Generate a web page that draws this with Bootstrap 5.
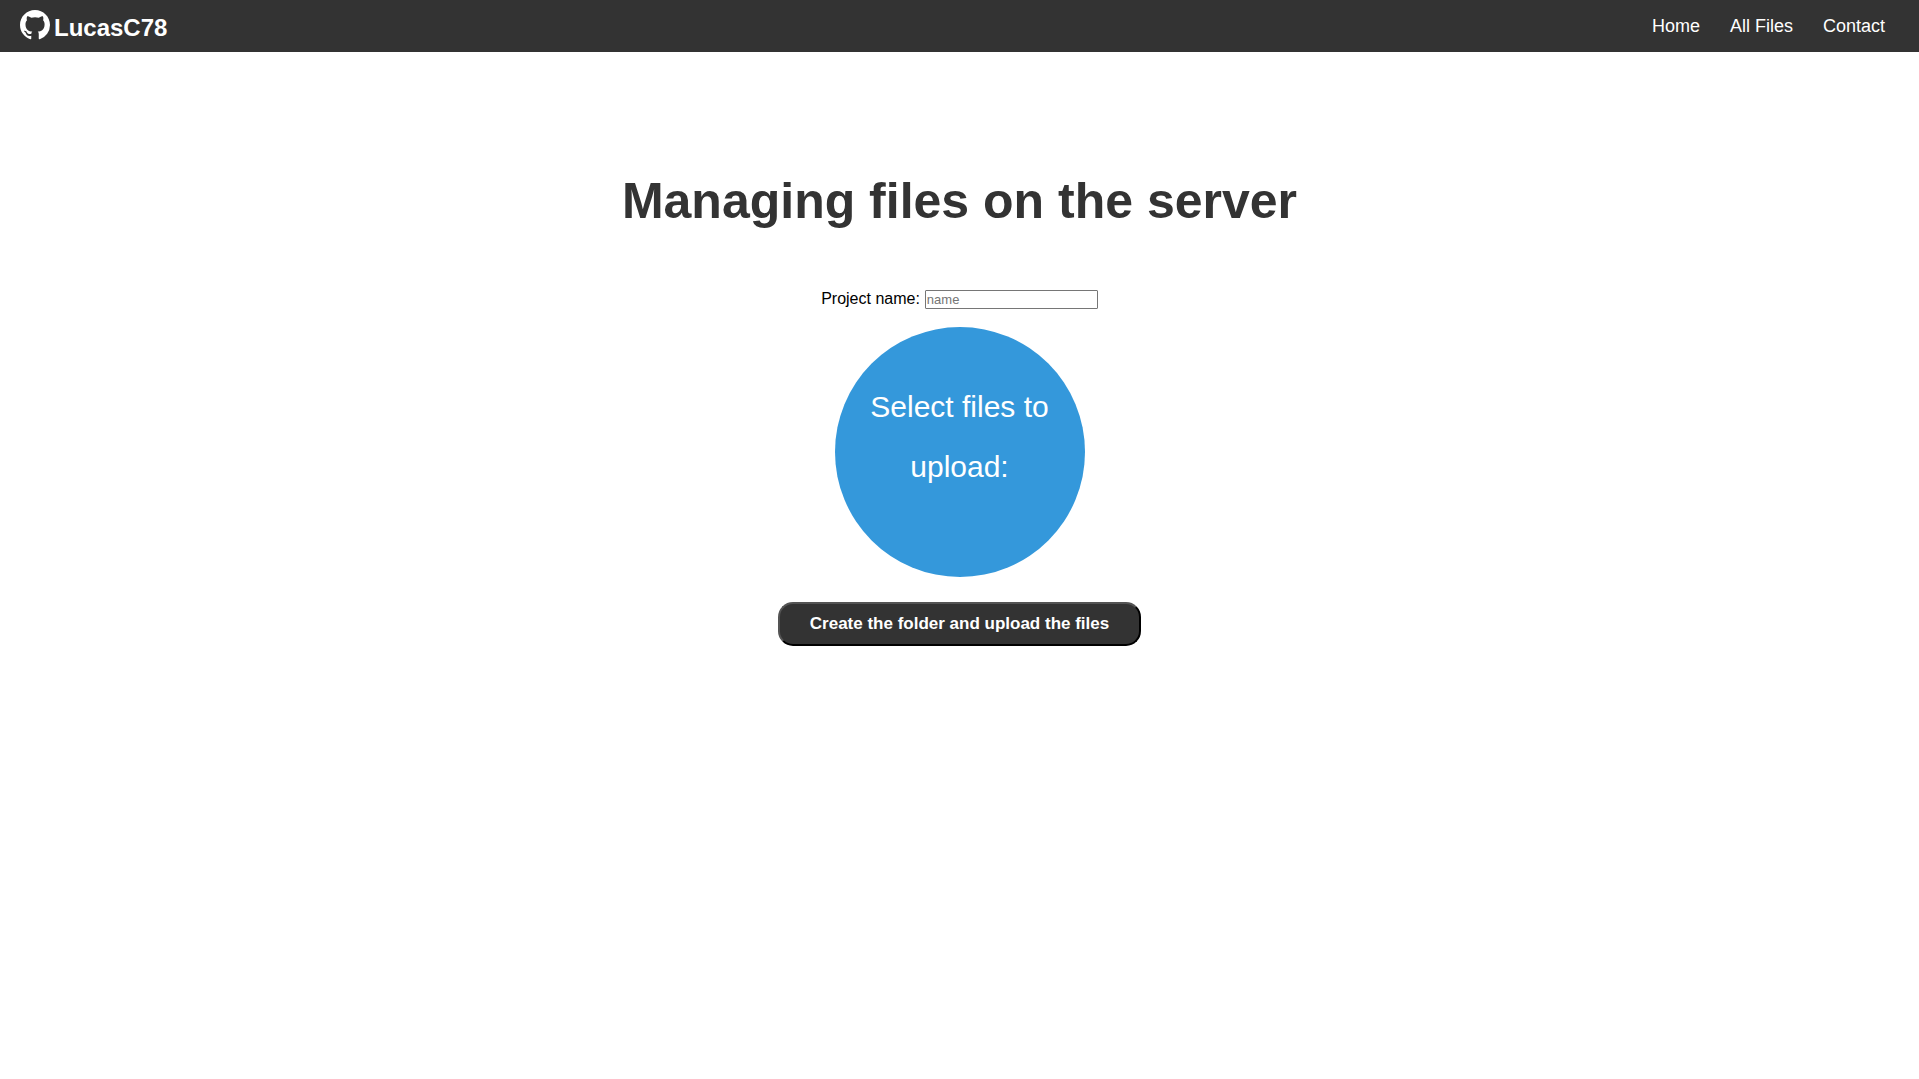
<!DOCTYPE html>
<html lang="en">
<head>
<meta charset="utf-8">
<meta name="viewport" content="width=device-width, initial-scale=1">
<title>Managing files on the server</title>
<link href="https://cdn.jsdelivr.net/npm/bootstrap@5.3.0/dist/css/bootstrap.min.css" rel="stylesheet">
<style>
  body { font-family: "Liberation Sans", Arial, sans-serif; color: #000; }
  .site-bar { background: #333; padding: 10px 19px 10px 20px; }
  .site-bar .navbar-brand { font-size: 24px; line-height: 28px; color: #fff; gap: 4px; }
  .site-bar .navbar-nav .nav-link { font-size: 18px; line-height: 32px; color: #fff; padding: 0 15px; }
  .page-title { font-size: 50px; line-height: 58px; color: #333; margin: 120px 0 60px; }
  .name-row { gap: 5px; margin-bottom: 18px; line-height: 18px; }
  .name-box { width: 173px; height: 19px; padding: 1px; font-size: 13px; line-height: 15px; border: 1px solid #767676; border-radius: 1px; }
  .name-box::placeholder { color: #757575; }
  .drop-circle { width: 250px; height: 250px; padding: 50px 30px; font-size: 30px; line-height: 60px; background: #3498db; cursor: pointer; }
  .send-button { margin-top: 25px; padding: 10px 30px; font-size: 17px; line-height: 20px; color: #fff; background: #333; border: 2px outset #000; border-radius: 15px; }
</style>
</head>
<body>
<nav class="navbar navbar-expand site-bar">
  <a class="navbar-brand d-flex align-items-start fw-bold p-0 m-0" href="#">
    <svg width="30" height="30" viewBox="0 0 16 16" fill="currentColor" aria-hidden="true"><path d="M8 0C3.58 0 0 3.58 0 8c0 3.54 2.29 6.53 5.47 7.59.4.07.55-.17.55-.38 0-.19-.01-.82-.01-1.49-2.01.37-2.53-.49-2.69-.94-.09-.23-.48-.94-.82-1.13-.28-.15-.68-.52-.01-.53.63-.01 1.08.58 1.23.82.72 1.21 1.87.87 2.33.66.07-.52.28-.87.51-1.07-1.78-.2-3.64-.89-3.64-3.95 0-.87.31-1.59.82-2.15-.08-.2-.36-1.02.08-2.12 0 0 .67-.21 2.2.82.64-.18 1.32-.27 2-.27s1.36.09 2 .27c1.53-1.04 2.2-.82 2.2-.82.44 1.1.16 1.92.08 2.12.51.56.82 1.27.82 2.15 0 3.07-1.87 3.75-3.65 3.95.29.25.54.73.54 1.48 0 1.07-.01 1.93-.01 2.2 0 .21.15.46.55.38A8.01 8.01 0 0 0 16 8c0-4.42-3.58-8-8-8z"/></svg>
    <span class="pt-1">LucasC78</span>
  </a>
  <div class="navbar-nav ms-auto">
    <a class="nav-link" href="#">Home</a>
    <a class="nav-link" href="#">All Files</a>
    <a class="nav-link" href="#">Contact</a>
  </div>
</nav>
<main class="text-center">
  <h1 class="page-title fw-bold">Managing files on the server</h1>
  <form class="d-flex flex-column align-items-center">
    <div class="name-row d-flex align-items-start justify-content-center">
      <label for="project-name">Project name:</label>
      <input class="name-box" id="project-name" type="text" placeholder="name">
    </div>
    <label class="drop-circle rounded-circle text-white" for="project-files">Select files to upload:</label>
    <input class="d-none" id="project-files" type="file" multiple>
    <button class="send-button fw-bold" type="button">Create the folder and upload the files</button>
  </form>
</main>
<script src="https://cdn.jsdelivr.net/npm/bootstrap@5.3.0/dist/js/bootstrap.bundle.min.js"></script>
</body>
</html>
